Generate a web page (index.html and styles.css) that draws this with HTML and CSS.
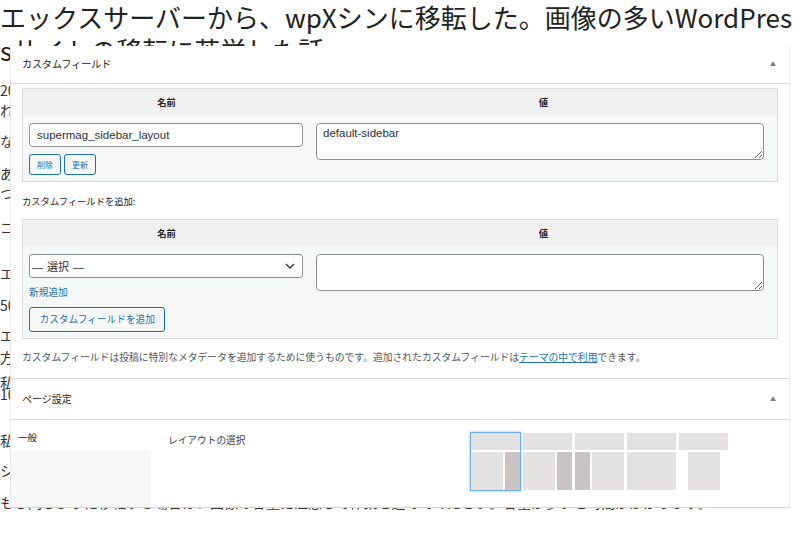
FILE: index.html
```html
<!DOCTYPE html>
<html lang="ja">
<head>
<meta charset="utf-8">
<title>wpXシン移転</title>
<link rel="stylesheet" href="styles.css">
</head>
<body>
<article class="article">
  <h1 class="title">エックスサーバーから、wpXシンに移転した。画像の多いWordPressサイトの移転に苦労した話</h1>
  <p class="line g15">2023年12月に、エックスサーバーからwpXシンへサイトを移転しました。</p>
  <p class="line g2">れまでの経緯と移転作業について書いていきます。</p>
  <p class="line g13">なぜ移転したのかというと、料金の問題です。</p>
  <p class="line g14">あらかじめ移転の手順を確認しておきました。</p>
  <p class="line g2">つまずいたポイントをまとめます。</p>
  <p class="line g16">コスト面での比較</p>
  <p class="line g28">エックスサーバーのプランは月額が高めでした。</p>
  <p class="line g14">50GBを超える画像があり、移転に時間がかかりました。</p>
  <p class="line g12">エラーが何度も発生しました。</p>
  <p class="line g4">方法を変えて再挑戦しました。</p>
  <p class="line tight g10">私は手動で移転することにしました。</p>
  <p class="line tight">10時間以上かかりました。</p>
  <p class="line g31">私が行った設定を紹介します。</p>
  <p class="line g12">シンプルな設定で問題ありませんでした。</p>
  <p class="line g14">もし同じように移転する場合は、画像の容量に注意して作業を進めてください。容量が多いと時間がかかります。</p>
</article>

<div class="shot">
  <section class="postbox">
    <div class="pb-head first">
      <h2 class="pb-title">カスタムフィールド</h2>
      <span class="toggle">▲</span>
    </div>
    <div class="pb-inside">
      <div class="cf-table">
        <div class="cf-th">名前</div>
        <div class="cf-th">値</div>
        <div class="cf-td name">
          <input class="field" type="text" value="supermag_sidebar_layout">
          <div class="btns">
            <button class="btn-s">削除</button>
            <button class="btn-s">更新</button>
          </div>
        </div>
        <div class="cf-td value">
          <textarea class="area">default-sidebar</textarea>
        </div>
      </div>

      <p class="add-label">カスタムフィールドを追加:</p>

      <div class="cf-table">
        <div class="cf-th">名前</div>
        <div class="cf-th">値</div>
        <div class="cf-td name">
          <div class="select">
            <span class="select-text">— 選択 —</span>
            <svg class="chev" width="10" height="6" viewBox="0 0 10 6"><path d="M1 1 L5 5 L9 1" fill="none" stroke="#2c3338" stroke-width="1.3"/></svg>
          </div>
          <a class="new-link" href="#">新規追加</a>
          <button class="btn">カスタムフィールドを追加</button>
        </div>
        <div class="cf-td value">
          <textarea class="area"></textarea>
        </div>
      </div>

      <p class="desc">カスタムフィールドは投稿に特別なメタデータを追加するために使うものです。追加されたカスタムフィールドは<a href="#">テーマの中で利用</a>できます。</p>
    </div>
  </section>

  <section class="postbox second">
    <div class="pb-head">
      <h2 class="pb-title">ページ設定</h2>
      <span class="toggle">▲</span>
    </div>
    <div class="ps-body">
      <ul class="tabs">
        <li class="tab active">一般</li>
      </ul>
      <div class="ps-panel">
        <div class="ps-label">レイアウトの選択</div>
        <div class="layouts">
          <div class="layout selected">
            <div class="l-hd"></div>
            <div class="l-bd"><div class="l-main"></div><div class="l-side"></div></div>
          </div>
          <div class="layout">
            <div class="l-hd"></div>
            <div class="l-bd"><div class="l-main"></div><div class="l-side"></div></div>
          </div>
          <div class="layout">
            <div class="l-hd"></div>
            <div class="l-bd"><div class="l-side"></div><div class="l-main"></div></div>
          </div>
          <div class="layout">
            <div class="l-hd"></div>
            <div class="l-bd"><div class="l-main"></div></div>
          </div>
          <div class="layout center">
            <div class="l-hd"></div>
            <div class="l-bd"><div class="l-main"></div></div>
          </div>
        </div>
      </div>
    </div>
  </section>
</div>
</body>
</html>
```

FILE: styles.css
```css
* { box-sizing: border-box; }

html, body {
  margin: 0;
  padding: 0;
  background: #fff;
}

body {
  width: 800px;
  height: 533px;
  overflow: hidden;
  position: relative;
  font-family: "Noto Sans CJK JP", "Noto Sans", sans-serif;
}

/* ---------- background article ---------- */
.article { color: #333; }

.title {
  margin: 0;
  font-size: 26px;
  line-height: 33px;
  font-weight: normal;
  color: #222;
  word-break: break-all;
}

.line {
  margin: 0;
  font-size: 14px;
  line-height: 18px;
  white-space: nowrap;
}
.line.tight { line-height: 12px; }

.g2 { margin-top: 2px; }
.g4 { margin-top: 4px; }
.g10 { margin-top: 10px; }
.g12 { margin-top: 12px; }
.g13 { margin-top: 13px; }
.g14 { margin-top: 14px; }
.g15 { margin-top: 15px; }
.g16 { margin-top: 16px; }
.g28 { margin-top: 28px; }
.g31 { margin-top: 31px; }

/* ---------- screenshot overlay ---------- */
.shot {
  position: absolute;
  left: 10px;
  top: 46px;
  width: 780px;
  height: 462px;
  background: #fff;
  border-left: 1px solid #e8e8e8;
  border-right: 1px solid #e8e8e8;
  border-bottom: 1px solid #d6d6d6;
  display: flex;
  flex-direction: column;
  color: #1d2327;
}

.postbox.second {
  border-top: 1px solid #dcdcde;
  flex: 1;
  display: flex;
  flex-direction: column;
}

.pb-head {
  height: 41px;
  border-bottom: 1px solid #dcdcde;
  display: flex;
  align-items: center;
  justify-content: space-between;
  padding: 0 13px 1px 11px;
}
.pb-head.first {
  height: 38px;
  padding-bottom: 3px;
}

.pb-title {
  margin: 0;
  font-size: 10px;
  font-weight: normal;
  color: #1d2327;
}

.toggle {
  font-size: 6px;
  color: #787c82;
}

.pb-inside {
  padding: 4px 11px 14px;
}

/* tables */
.cf-table {
  display: grid;
  grid-template-columns: 287px 1fr;
  border: 1px solid #dcdcde;
}

.cf-th {
  height: 26px;
  background: #f0f0f1;
  display: flex;
  align-items: center;
  justify-content: center;
  font-size: 9.3px;
  font-weight: bold;
  color: #1d2327;
}

.cf-td {
  background: #f6f7f7;
  padding-top: 8px;
}
.cf-td.name {
  padding: 8px 7px 6px 6px;
  display: flex;
  flex-direction: column;
  align-items: flex-start;
}
.cf-td.value {
  padding: 8px 13px 0 6px;
}

.field {
  display: block;
  width: 100%;
  height: 24px;
  margin: 0;
  border: 1px solid #8c8f94;
  border-radius: 4px;
  padding: 0 7px;
  background: #fff;
  font-family: "Liberation Sans", Arial, sans-serif;
  font-size: 11.5px;
  color: #2c3338;
}

.area {
  display: block;
  width: 100%;
  height: 37px;
  margin: 0;
  border: 1px solid #8c8f94;
  border-radius: 4px;
  padding: 3px 6px;
  background: #fff;
  font-family: "Liberation Sans", Arial, sans-serif;
  font-size: 11.5px;
  line-height: 13px;
  color: #2c3338;
  resize: vertical;
}

.btns {
  display: flex;
  gap: 3px;
  margin-top: 7px;
}

.btn-s,
.btn {
  margin: 0;
  border: 1px solid #2271b1;
  border-radius: 3px;
  background: #f6f7f7;
  color: #2271b1;
  font-family: "Noto Sans CJK JP", sans-serif;
}

.btn-s {
  height: 21px;
  padding: 0 7px;
  font-size: 8px;
  line-height: 19px;
}

.select {
  width: 100%;
  height: 24px;
  border: 1px solid #8c8f94;
  border-radius: 3px;
  background: #fff;
  display: flex;
  align-items: center;
  justify-content: space-between;
  padding: 0 7px 0 2px;
  color: #2c3338;
}
.select-text {
  font-family: "Liberation Sans", "Noto Sans CJK JP", sans-serif;
  font-size: 11px;
  word-spacing: 1px;
}
.chev { display: block; }

.new-link {
  margin-top: 7px;
  font-size: 9.7px;
  line-height: 15px;
  color: #2271b1;
  text-decoration: none;
}

.btn {
  margin-top: 7px;
  height: 25px;
  padding: 0 9.5px;
  font-size: 9.7px;
  line-height: 23px;
}

.add-label {
  margin: 11px 0 10px;
  font-size: 9.3px;
  line-height: 16px;
  color: #1d2327;
}

.desc {
  margin: 11px 0 0;
  font-size: 9.8px;
  line-height: 14px;
  color: #50575e;
  white-space: nowrap;
}
.desc a {
  color: #2271b1;
  text-decoration: underline;
}

/* page settings */
.ps-body {
  flex: 1;
  display: flex;
}

.tabs {
  list-style: none;
  margin: 0;
  padding: 0;
  width: 140px;
  background: #f7f7f7;
}

.tab {
  height: 31px;
  padding: 10px 0 0 7px;
  font-size: 9.5px;
  line-height: 14px;
  color: #1d2327;
}
.tab.active { background: #fff; }

.ps-panel {
  flex: 1;
  display: flex;
  padding: 12px 0 0 17px;
}

.ps-label {
  width: 302px;
  font-size: 9.7px;
  line-height: 16px;
  color: #3c434a;
}

.layouts {
  display: flex;
  gap: 1px;
  align-items: flex-start;
}

.layout {
  width: 51px;
  height: 59px;
  border: 1px solid transparent;
  display: grid;
  grid-template-rows: 17px 38px;
  row-gap: 2px;
}
.layout.selected {
  border-color: #72aee6;
  box-shadow: 0 0 3px rgba(34, 113, 177, 0.45);
}

.l-hd { background: #e3e1e1; }

.l-bd {
  display: flex;
  gap: 2px;
}
.layout.center .l-bd { justify-content: center; }

.l-main {
  flex: 1;
  background: #e3e1e1;
}
.layout.center .l-main {
  flex: 0 0 32px;
}

.l-side {
  width: 15px;
  background: #c9c3c3;
}
```
